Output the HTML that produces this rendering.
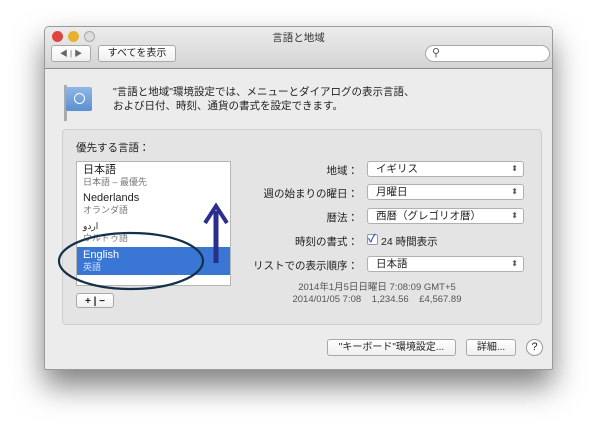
<!DOCTYPE html>
<html><head><meta charset="utf-8"><style>
*{box-sizing:border-box;margin:0;padding:0}
body{width:600px;height:430px;background:#fff;position:relative;overflow:hidden;font-family:"Liberation Sans","Noto Sans CJK JP",sans-serif;font-size:10.5px;color:#222}
.abs{position:absolute}
.win{left:44px;top:26px;width:509px;height:344px;background:#ececec;border:1px solid #9a9a9a;border-radius:5px 5px 2px 2px;box-shadow:0 16px 30px rgba(0,0,0,.5);overflow:hidden}
.tb{left:0;top:0;width:100%;height:42px;background:linear-gradient(#ececec,#d4d4d4);border-bottom:1px solid #8f8f8f}
.dot{width:11px;height:11px;border-radius:50%;top:4px}
.btn{background:linear-gradient(#fff,#f0f0f0);border:1px solid #a8a8a8;border-radius:3px;text-align:center;font-size:10px;line-height:15px}
.pop{left:322px;width:157px;height:16px;background:#fff;border:1px solid #b0b0b0;border-radius:3px;padding-left:8px;font-size:10.5px;line-height:14px}
.pop:after{content:"⬍";position:absolute;right:5px;top:0;font-size:8px;color:#555}
.lbl{width:160px;text-align:right;font-size:10.5px}
</style></head><body>
<div class="abs win">
 <div class="abs tb">
  <div class="abs dot" style="left:7px;background:#e0443e"></div>
  <div class="abs dot" style="left:23px;background:#e9b02d"></div>
  <div class="abs dot" style="left:39px;background:#ddd;border:1px solid #aaa"></div>
  <div class="abs" style="left:0;width:100%;top:3px;text-align:center;font-size:10.5px;color:#333">言語と地域</div>
  <div class="abs btn" style="left:6px;top:18px;width:40px;height:17px;color:#666;font-size:8px">◀ | ▶</div>
  <div class="abs btn" style="left:53px;top:18px;width:78px;height:17px">すべてを表示</div>
  <div class="abs" style="left:380px;top:18px;width:125px;height:17px;background:#fff;border:1px solid #a8a8a8;border-radius:9px;font-size:11px;padding-left:6px;color:#555">⚲</div>
 </div>
 <div class="abs" style="left:19px;top:58px;width:3px;height:36px;background:#aaa"></div>
 <div class="abs" style="left:21px;top:60px;width:26px;height:24px;background:linear-gradient(#8fb7e6,#5b8fd0);border-radius:2px"></div>
 <div class="abs" style="left:29px;top:66px;width:11px;height:11px;border:1.5px solid #fff;border-radius:50%"></div>
 <div class="abs" style="left:68px;top:58px;font-size:10.5px;line-height:14px">"言語と地域"環境設定では、メニューとダイアログの表示言語、<br>および日付、時刻、通貨の書式を設定できます。</div>
 <div class="abs" style="left:17px;top:102px;width:480px;height:196px;background:#e4e4e4;border:1px solid #cfcfcf;border-radius:4px"></div>
 <div class="abs" style="left:31px;top:113px">優先する言語：</div>
 <div class="abs" style="left:31px;top:134px;width:155px;height:125px;background:#fff;border:1px solid #b5b5b5"></div>
 <div class="abs" style="left:38px;top:137px;line-height:12px"><span style="font-size:11px">日本語</span><br><span style="font-size:9px;color:#777">日本語 – 最優先</span></div>
 <div class="abs" style="left:38px;top:165px;line-height:12px"><span style="font-size:11px">Nederlands</span><br><span style="font-size:9px;color:#777">オランダ語</span></div>
 <div class="abs" style="left:38px;top:193px;line-height:12px"><span style="font-size:9px">اردو</span><br><span style="font-size:9px;color:#777">ウルドゥ語</span></div>
 <div class="abs" style="left:32px;top:220px;width:153px;height:28px;background:#3a76d4;color:#fff;padding-left:6px;line-height:12px;padding-top:2px"><span style="font-size:11px">English</span><br><span style="font-size:9px;color:#cfe0fa">英語</span></div>
 <svg class="abs" style="left:0;top:0" width="509" height="344">
  <path d="M171 236 V184" stroke="#2a2d8c" stroke-width="5" fill="none"/>
  <path d="M160 196 L171 179 L182 196" stroke="#2a2d8c" stroke-width="4" fill="none"/>
  <ellipse cx="86" cy="234" rx="72" ry="28" fill="none" stroke="#14304a" stroke-width="2.2"/>
 </svg>
 <div class="abs btn" style="left:31px;top:266px;width:38px;height:15px;font-weight:bold">+ | −</div>
 <div class="abs lbl" style="left:153px;top:136px">地域：</div>
 <div class="abs pop" style="top:134px">イギリス</div>
 <div class="abs lbl" style="left:153px;top:159px">週の始まりの曜日：</div>
 <div class="abs pop" style="top:157px">月曜日</div>
 <div class="abs lbl" style="left:153px;top:183px">暦法：</div>
 <div class="abs pop" style="top:181px">西暦（グレゴリオ暦）</div>
 <div class="abs lbl" style="left:153px;top:207px">時刻の書式：</div>
 <div class="abs" style="left:322px;top:207px;width:11px;height:11px;background:#fff;border:1px solid #999;border-radius:2px;color:#2a5fc0;font-size:11px;line-height:9px;font-weight:bold">✓</div>
 <div class="abs" style="left:336px;top:207px">24 時間表示</div>
 <div class="abs lbl" style="left:153px;top:231px">リストでの表示順序：</div>
 <div class="abs pop" style="top:229px">日本語</div>
 <div class="abs" style="left:222px;top:255px;width:220px;text-align:center;font-size:9.5px;color:#555;line-height:12px">2014年1月5日日曜日 7:08:09 GMT+5<br>2014/01/05 7:08 &nbsp;&nbsp; 1,234.56 &nbsp;&nbsp; £4,567.89</div>
 <div class="abs btn" style="left:282px;top:312px;width:129px;height:17px">"キーボード"環境設定...</div>
 <div class="abs btn" style="left:421px;top:312px;width:50px;height:17px">詳細...</div>
 <div class="abs" style="left:481px;top:312px;width:17px;height:17px;border:1px solid #999;border-radius:50%;background:#fff;text-align:center;line-height:15px;font-size:11px">?</div>
</div>
</body></html>
